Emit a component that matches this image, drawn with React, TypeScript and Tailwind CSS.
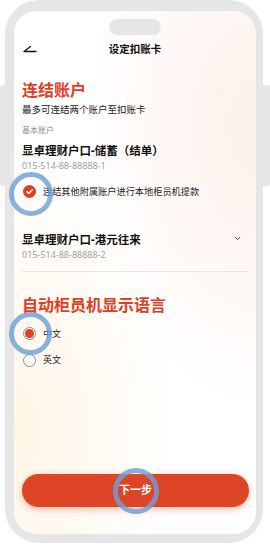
import { ChevronDown } from 'lucide-react';

const font = { fontFamily: '"Noto Sans", "Noto Sans CJK SC", sans-serif' };

function CheckCircle() {
  return (
    <svg width="13" height="13" viewBox="0 0 13 13" className="shrink-0">
      <circle cx="6.5" cy="6.5" r="6.5" fill="#e0401f" />
      <path d="M3.8 6.7 L5.7 8.5 L9.3 4.7" fill="none" stroke="#fff" strokeWidth="1.6" strokeLinecap="round" strokeLinejoin="round" />
    </svg>
  );
}

function Radio({ checked, label }: { checked?: boolean; label: string }) {
  return (
    <div className="flex items-center h-[14px]">
      <div className="w-[13px] h-[13px] ml-[1px] rounded-full border border-[#8a8a8a] bg-white flex items-center justify-center">
        {checked && <div className="w-[9px] h-[9px] rounded-full bg-[#e0401f]" />}
      </div>
      <span className="ml-[7px] text-[9px] leading-[12px] text-[#222]">{label}</span>
    </div>
  );
}

function Ring({ className }: { className: string }) {
  return <div className={`absolute rounded-full border-[5px] border-[rgba(110,160,215,0.82)] ${className}`} />;
}

export default function App() {
  return (
    <div className="relative w-[270px] h-[544px] bg-white overflow-hidden" style={font}>
      <div className="flex items-start">
        {/* side button left */}
        <div className="w-[5px] h-[101px] mt-[85px] rounded-l-[3px] bg-[#e6e6e6]" />

        {/* phone frame */}
        <div className="w-[258px] h-[543px] rounded-[34px] bg-[#e6e6e6] pl-[9px] pr-[7px] pt-[11px] pb-[9px]">
          <div className="relative h-full rounded-[22px] overflow-hidden flex flex-col bg-white bg-[radial-gradient(ellipse_at_100%_22%,#fdf0ea_0%,rgba(253,240,234,0)_50%),radial-gradient(ellipse_at_0%_80%,#fff5e6_0%,rgba(255,245,230,0)_48%)]">
            {/* notch */}
            <div className="mt-[8px] mx-auto w-[52px] h-[16px] rounded-full bg-[#e6e6e6]" />

            {/* header */}
            <div className="mt-[5px] h-[18px] relative flex items-center justify-center">
              <svg width="14" height="8" viewBox="0 0 14 8" className="absolute left-[9px] top-[5px]">
                <path d="M1 6.5 H13 M1 6.5 L7.5 1.5" fill="none" stroke="#111" strokeWidth="1.3" strokeLinecap="round" />
              </svg>
              <span className="text-[10.5px] font-semibold text-[#111] leading-[14px]">设定扣账卡</span>
            </div>

            <div className="pl-[8px] pr-[7px] flex flex-col flex-1">
              <h1 className="mt-[21.5px] text-[16px] leading-[20px] font-bold text-[#e23d1c]">连结账户</h1>
              <p className="mt-[3px] text-[9.5px] leading-[13px] text-[#222]">最多可连结两个账户至扣账卡</p>
              <p className="mt-[8px] text-[8px] leading-[11px] text-[#8a8a8a]">基本账户</p>

              <p className="mt-[8.5px] text-[11.5px] leading-[16px] font-bold text-[#111]">显卓理财户口-储蓄（结单）</p>
              <p className="mt-[0.5px] text-[9px] leading-[12px] text-[#a0a0a0]">015-514-88-88888-1</p>

              <div className="mt-[13px] h-[14px] flex items-center">
                <div className="ml-[1px]"><CheckCircle /></div>
                <span className="ml-[7px] text-[9.2px] leading-[12px] text-[#222]">连结其他附属账户进行本地柜员机提款</span>
              </div>

              <div className="mt-[33.5px] flex items-center justify-between">
                <p className="text-[11.5px] leading-[16px] font-bold text-[#111]">显卓理财户口-港元往来</p>
                <ChevronDown className="mr-[7px] -mt-[3px] w-[9px] h-[9px] text-[#222]" strokeWidth={2.5} />
              </div>
              <p className="mt-[0.5px] text-[9px] leading-[12px] text-[#a0a0a0]">015-514-88-88888-2</p>

              <div className="mt-[10.5px] h-px bg-[#e6e6e6]" />

              <h2 className="mt-[23px] text-[16px] leading-[20px] font-bold text-[#e23d1c]">自动柜员机显示语言</h2>

              <div className="mt-[11.5px]"><Radio checked label="中文" /></div>
              <div className="mt-[12.5px]"><Radio label="英文" /></div>

              <div className="mt-auto mb-[27px] h-[33px] rounded-full bg-[#dd4526] shadow-[0_2px_7px_rgba(221,69,38,0.4)] flex items-center justify-center">
                <span className="text-[11px] font-bold text-white">下一步</span>
              </div>
            </div>
          </div>
        </div>

        {/* side button right */}
        <div className="w-[7px] h-[101px] mt-[85px] rounded-r-[3px] bg-[#e6e6e6]" />
      </div>

      {/* tap highlights */}
      <Ring className="left-[9px] top-[172px] w-[44px] h-[44px]" />
      <Ring className="left-[8.5px] top-[312px] w-[43px] h-[43px]" />
      <Ring className="left-[113px] top-[467.5px] w-[46px] h-[46px]" />
    </div>
  );
}
